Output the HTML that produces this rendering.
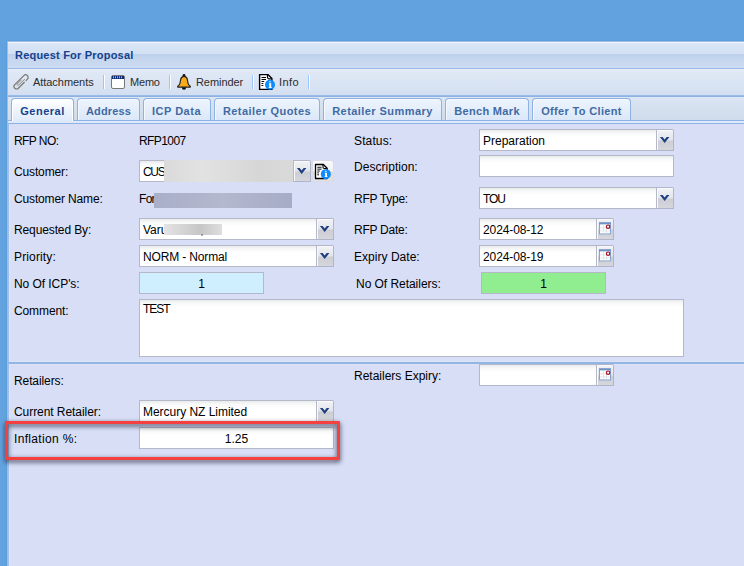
<!DOCTYPE html>
<html><head><meta charset="utf-8">
<style>
*{box-sizing:border-box;margin:0;padding:0}
html,body{width:744px;height:566px;overflow:hidden}
body{background:#62a3df;font-family:"Liberation Sans",sans-serif;font-size:12px;color:#000;position:relative}
.abs{position:absolute}
#dk1{left:6px;top:40px;width:1px;height:530px;background:#5b9cda}
#dk2{left:6px;top:40px;width:740px;height:1px;background:#5b9cda}
#panel{left:7px;top:41px;width:745px;height:530px;border:1px solid #9dbeea;background:#d7def6}
#lb2{left:8px;top:123px;width:1px;height:450px;background:#9fc0ea}
#lb3{left:9px;top:124px;width:1px;height:450px;background:#dde4f9}
#hdr{left:8px;top:42px;width:743px;height:27px;background:linear-gradient(#f3f7fd 0,#f3f7fd 1px,#dae6f6 1px,#d3e0f3 12px,#bccfec 12px,#c4d5ee 16px,#cddcf2 26px);border-bottom:1px solid #99bbe8}
#hdr span{position:absolute;left:7px;top:7px;font-weight:bold;font-size:11px;color:#15428b;white-space:nowrap}
#tb{left:8px;top:69px;width:743px;height:27px;background:linear-gradient(#e6edf8,#e0e8f5 3px,#d3dff1);border-bottom:1px solid #99bbe8}
.tbt{position:absolute;top:76px;font-size:11px;line-height:13px;color:#2c2c2c;white-space:nowrap}
.sep{position:absolute;top:75px;width:2px;height:14px;border-left:1px solid #98c8ff;border-right:1px solid #fff}
#strip{left:8px;top:96px;width:743px;height:25px;background:linear-gradient(#dbe5f3,#cfdcec);border-top:1px solid #8db2e3;border-bottom:1px solid #8db2e3}
.tab{position:absolute;top:98px;height:22px;border:1px solid #8db2e3;border-bottom:none;border-radius:4px 4px 0 0;background:linear-gradient(#eef4fd,#dbe8f9);box-shadow:inset 1px 1px 0 #f4f8fe;font-weight:bold;font-size:11px;color:#416aa3;text-align:center;line-height:25px;white-space:nowrap}
.tab.act{background:linear-gradient(#ffffff,#deeafc);color:#15428b;height:23px;box-shadow:inset 1px 1px 0 #fff,inset -1px 0 0 #fff}
#spacer{left:8px;top:121px;width:743px;height:3px;background:#deeafc;border-bottom:1px solid #8db2e3}
.lbl{position:absolute;white-space:nowrap;font-size:12px;line-height:14px}
.inp{position:absolute;height:22px;border:1px solid #b5b8c8;background:#fff linear-gradient(#e9ebec 0,#f7f8f8 3px,#fff 7px);font-size:12px;line-height:22px;padding-left:3px;white-space:nowrap;overflow:hidden}
.trg{position:absolute;width:17px;height:22px;border:1px solid #b0b5c9;border-left:none;border-top-right-radius:2px;background:linear-gradient(#f2f3f6 0,#e4e5ea 10px,#cdced4 11px,#d6d7dc 20px);box-shadow:inset 1px 1px 0 #fafafc}
.trg svg{position:absolute;left:0;top:0}
</style></head><body>
<div class="abs" id="dk1"></div><div class="abs" id="dk2"></div>
<div class="abs" id="panel"></div>
<div class="abs" id="lb2"></div><div class="abs" id="lb3"></div>
<div class="abs" id="hdr"><span id="hdrt" style="letter-spacing:0.21px">Request For Proposal</span></div>
<div class="abs" id="tb"></div>

<svg class="abs" style="left:12px;top:73px" width="18" height="18" viewBox="0 0 18 18"><g transform="translate(0.100,-0.100) rotate(45 9 9)" fill="none" stroke="#7d7770" stroke-width="1.200" stroke-linecap="round"><path d="M11.550 7 V15.400 A2.550 2.550 0 0 1 6.450 15.400 V2.600 A2.550 2.550 0 0 1 11.550 2.600 V4.500"/><path d="M9.600 5 V13 A0.900 0.900 0 0 1 7.800 13 V7.500" stroke="#8a857f" stroke-width="0.900"/></g></svg>
<svg class="abs" style="left:110.400px;top:74px" width="17" height="17" viewBox="0 0 17 17"><rect x="1.500" y="1.500" width="13" height="13" rx="1.500" fill="#fff" stroke="#7a7676"/><rect x="2" y="2" width="12" height="3" fill="#0b2a7a"/><path d="M3.500 2.300v2M5.500 2.300v2M7.500 2.300v2M9.500 2.300v2M11.500 2.300v2" stroke="#dfe6f5" stroke-width=".7"/></svg>
<svg class="abs" style="left:176px;top:73px" width="17" height="18" viewBox="0 0 17 18"><circle cx="8" cy="2.300" r="1.350" fill="#111"/><path d="M5.800 14.300a2.200 2.500 0 0 0 4.400 0z" fill="#111"/><path d="M8 3.300C5.900 3.300 5 4.800 4.650 6.500L3.950 10.500C3.800 11.500 3 12.300 1.700 13.400V14.050H14.300V13.400C13 12.300 12.200 11.500 12.050 10.500L11.350 6.500C11 4.800 10.100 3.300 8 3.300Z" fill="#fbab18" stroke="#222" stroke-width="1.200" stroke-linejoin="round"/></svg>
<svg class="abs" style="left:258px;top:73px" width="18" height="18" viewBox="0 0 18 18"><path d="M1.600 1.600h8.300l4 4v10.800h-12.300z" fill="#fff" stroke="#000" stroke-width="1.400" stroke-linejoin="round"/><path d="M9.500 1.800v2.500a1.500 1.500 0 0 0 1.500 1.500h2.500" fill="none" stroke="#000" stroke-width="1.200"/><path d="M3.500 4.500h4.500M3.500 6.500h4.500M3.500 8.500h2.700M3.500 10.500h1.800M3.500 12.500h1.800" stroke="#000" stroke-width="1"/><circle cx="12" cy="11.800" r="5" fill="#0d8bff"/><path d="M12 8l1.300 1.300h-2.600z M11 10.300h2.200v3.600h.5v1h-3v-1h.6v-2.600h-.5z" fill="#fff"/></svg>

<span class="tbt" id="t_att" style="left:33px;letter-spacing:-0.05px">Attachments</span>
<div class="sep" style="left:103px"></div>
<span class="tbt" id="t_memo" style="left:130px;letter-spacing:-0.2px">Memo</span>
<div class="sep" style="left:169px"></div>
<span class="tbt" id="t_rem" style="left:196px;letter-spacing:-0.07px">Reminder</span>
<div class="sep" style="left:252px"></div>
<span class="tbt" id="t_info" style="left:279px;letter-spacing:0.45px">Info</span>
<div class="sep" style="left:308px"></div>
<div class="abs" id="strip"></div>
<div class="abs" id="spacer"></div>
<div class="tab act" style="left:11px;width:63px"><span id="tab1" style="letter-spacing:0.5px">General</span></div>
<div class="tab" style="left:77px;width:63px"><span id="tab2" style="letter-spacing:0.17px">Address</span></div>
<div class="tab" style="left:143px;width:68px"><span id="tab3" style="letter-spacing:0.5px;margin-left:-1px">ICP Data</span></div>
<div class="tab" style="left:214px;width:106px"><span id="tab4" style="letter-spacing:0.46px">Retailer Quotes</span></div>
<div class="tab" style="left:323px;width:119px"><span id="tab5" style="letter-spacing:0.44px">Retailer Summary</span></div>
<div class="tab" style="left:445px;width:84px"><span id="tab6" style="letter-spacing:0.33px">Bench Mark</span></div>
<div class="tab" style="left:532px;width:99px"><span id="tab7" style="letter-spacing:0.33px">Offer To Client</span></div>
<span class="lbl" id="l_rfpno" style="left:14px;top:134px;letter-spacing:-0.57px">RFP NO:</span>
<span class="lbl" id="v_rfpno" style="left:139px;top:134px;letter-spacing:-0.59px">RFP1007</span>
<span class="lbl" id="l_cust" style="left:14px;top:165px;letter-spacing:-0.14px">Customer:</span>
<div class="inp" style="left:139px;top:160px;width:155px"><span id="v_cust" style="letter-spacing:-1.3px">CUS</span></div><div class="abs" style="left:164px;top:160px;width:129px;height:22px;background:linear-gradient(90deg,#dadada,#e2e2e2 30%,#d6d6d6 75%,#d9d9d9)"></div><div class="trg" style="left:294px;top:160px"><svg width="17" height="22" viewBox="0 0 17 22"><polygon points="2.900,7.100 5.600,7.100 7.650,9.500 9.700,7.100 12.400,7.100 7.650,13.100" fill="#1e3f80"/></svg></div>
<div class="abs" style="left:312px;top:160px;width:22px;height:22px;border-radius:3px;background:linear-gradient(#fafafa 0,#f2f2f2 10px,#dcdcdc 11px,#e2e2e2);border:1px solid #d9dbe6"></div>
<svg class="abs" style="left:314.350px;top:162.650px" width="17" height="17" viewBox="0 0 18 18"><path d="M1.600 1.600h8.300l4 4v10.800h-12.300z" fill="#fff" stroke="#000" stroke-width="1.400" stroke-linejoin="round"/><path d="M9.500 1.800v2.500a1.500 1.500 0 0 0 1.500 1.500h2.500" fill="none" stroke="#000" stroke-width="1.200"/><path d="M3.500 4.500h4.500M3.500 6.500h4.500M3.500 8.500h2.700M3.500 10.500h1.800M3.500 12.500h1.800" stroke="#000" stroke-width="1"/><circle cx="12.550" cy="11.800" r="5.300" fill="#0d8bff"/><path transform="translate(0.550,0)" d="M12 8l1.300 1.300h-2.600z M11 10.300h2.200v3.600h.5v1h-3v-1h.6v-2.600h-.5z" fill="#fff"/></svg>
<span class="lbl" id="l_cname" style="left:14px;top:192px;letter-spacing:-0.15px">Customer Name:</span>
<span class="lbl" id="v_cname" style="left:139px;top:192px;letter-spacing:-0.7px">For</span>
<div class="abs" style="left:154px;top:193px;width:138px;height:15px;background:linear-gradient(90deg,#a9afc8,#b3b8ce 50%,#a6acc6)"></div>
<span class="lbl" id="l_req" style="left:14px;top:223px;letter-spacing:-0.12px">Requested By:</span>
<div class="inp" style="left:139px;top:218px;width:178px"><span id="v_req">Varu</span></div><div class="abs" style="left:164px;top:224px;width:58px;height:11px;background:linear-gradient(90deg,#e4e4e4,#c6c6c6 62%,#dedede)"></div><div class="trg" style="left:317px;top:218px"><svg width="17" height="22" viewBox="0 0 17 22"><polygon points="2.900,7.100 5.600,7.100 7.650,9.500 9.700,7.100 12.400,7.100 7.650,13.100" fill="#1e3f80"/></svg></div>
<div class="abs" style="left:201px;top:234px;width:2px;height:2px;background:#8a8a8a;border-radius:1px"></div>
<span class="lbl" id="l_pri" style="left:14px;top:250px;letter-spacing:0.14px">Priority:</span>
<div class="inp" style="left:139px;top:245px;width:178px"><span id="v_pri" style="letter-spacing:-0.15px">NORM - Normal</span></div><div class="trg" style="left:317px;top:245px"><svg width="17" height="22" viewBox="0 0 17 22"><polygon points="2.900,7.100 5.600,7.100 7.650,9.500 9.700,7.100 12.400,7.100 7.650,13.100" fill="#1e3f80"/></svg></div>
<span class="lbl" id="l_icp" style="left:14px;top:277px;letter-spacing:-0.06px">No Of ICP's:</span>
<div class="inp" style="left:139px;top:272px;width:125px;background:#cfefff;text-align:center;padding:0"><span id="v_icp">1</span></div>
<span class="lbl" id="l_com" style="left:14px;top:304px;letter-spacing:-0.11px">Comment:</span>
<div class="inp" style="left:139px;top:299px;width:545px;height:58px;line-height:16px;padding-top:1px"><span id="v_com" style="letter-spacing:-1.03px">TEST</span></div>
<span class="lbl" id="l_stat" style="left:354px;top:134px;letter-spacing:0.13px">Status:</span>
<div class="inp" style="left:479px;top:129px;width:178px"><span id="v_stat" style="letter-spacing:0.0px">Preparation</span></div><div class="trg" style="left:657px;top:129px"><svg width="17" height="22" viewBox="0 0 17 22"><polygon points="2.900,7.100 5.600,7.100 7.650,9.500 9.700,7.100 12.400,7.100 7.650,13.100" fill="#1e3f80"/></svg></div>
<span class="lbl" id="l_desc" style="left:354px;top:160px;letter-spacing:0.03px">Description:</span>
<div class="inp" style="left:479px;top:155px;width:195px"></div>
<span class="lbl" id="l_type" style="left:354px;top:192px;letter-spacing:-0.26px">RFP Type:</span>
<div class="inp" style="left:479px;top:187px;width:178px"><span id="v_type" style="letter-spacing:-1.1px">TOU</span></div><div class="trg" style="left:657px;top:187px"><svg width="17" height="22" viewBox="0 0 17 22"><polygon points="2.900,7.100 5.600,7.100 7.650,9.500 9.700,7.100 12.400,7.100 7.650,13.100" fill="#1e3f80"/></svg></div>
<span class="lbl" id="l_rdate" style="left:354px;top:223px;letter-spacing:-0.26px">RFP Date:</span>
<div class="inp" style="left:479px;top:218px;width:118px"><span id="v_rdate" style="letter-spacing:-0.1px">2024-08-12</span></div><div class="trg cal" style="left:597px;top:218px"><svg width="17" height="22" viewBox="0 0 17 22"><g transform="translate(0,-0.600)"><rect x="2.500" y="4.500" width="11" height="11" fill="#fff" stroke="#86a5d3" stroke-width="1"/><rect x="2" y="4" width="12" height="2" fill="#6f93c7"/><path d="M6.500 6v9M9.500 6v9M3 9.500h10M3 12.500h10" stroke="#e1e4e9" stroke-width="1" fill="none"/><circle cx="11.100" cy="8.300" r="1.700" fill="#fff" stroke="#a3121c" stroke-width="1.200"/></g></svg></div>
<span class="lbl" id="l_edate" style="left:354px;top:250px;letter-spacing:0.03px">Expiry Date:</span>
<div class="inp" style="left:479px;top:245px;width:118px"><span id="v_edate" style="letter-spacing:-0.1px">2024-08-19</span></div><div class="trg cal" style="left:597px;top:245px"><svg width="17" height="22" viewBox="0 0 17 22"><g transform="translate(0,-0.600)"><rect x="2.500" y="4.500" width="11" height="11" fill="#fff" stroke="#86a5d3" stroke-width="1"/><rect x="2" y="4" width="12" height="2" fill="#6f93c7"/><path d="M6.500 6v9M9.500 6v9M3 9.500h10M3 12.500h10" stroke="#e1e4e9" stroke-width="1" fill="none"/><circle cx="11.100" cy="8.300" r="1.700" fill="#fff" stroke="#a3121c" stroke-width="1.200"/></g></svg></div>
<span class="lbl" id="l_nret" style="left:356px;top:277px;letter-spacing:-0.04px">No Of Retailers:</span>
<div class="inp" style="left:481px;top:272px;width:125px;background:#90ee90;text-align:center;padding:0"><span id="v_nret">1</span></div>
<div class="abs" style="left:9px;top:361px;width:740px;height:4px;background:#dde4f8"></div><div class="abs" style="left:8px;top:362px;width:740px;height:2px;background:#91b6e6"></div>
<span class="lbl" id="l_ret" style="left:14px;top:374px;letter-spacing:-0.1px">Retailers:</span>
<span class="lbl" id="l_rexp" style="left:354px;top:369px;letter-spacing:0.0px">Retailers Expiry:</span>
<div class="inp" style="left:479px;top:364px;width:118px"><span id="v_rexp"></span></div><div class="trg cal" style="left:597px;top:364px"><svg width="17" height="22" viewBox="0 0 17 22"><g transform="translate(0,-0.600)"><rect x="2.500" y="4.500" width="11" height="11" fill="#fff" stroke="#86a5d3" stroke-width="1"/><rect x="2" y="4" width="12" height="2" fill="#6f93c7"/><path d="M6.500 6v9M9.500 6v9M3 9.500h10M3 12.500h10" stroke="#e1e4e9" stroke-width="1" fill="none"/><circle cx="11.100" cy="8.300" r="1.700" fill="#fff" stroke="#a3121c" stroke-width="1.200"/></g></svg></div>
<span class="lbl" id="l_cur" style="left:14px;top:405px;letter-spacing:-0.06px">Current Retailer:</span>
<div class="inp" style="left:139px;top:400px;width:178px"><span id="v_cur" style="letter-spacing:-0.03px">Mercury NZ Limited</span></div><div class="trg" style="left:317px;top:400px"><svg width="17" height="22" viewBox="0 0 17 22"><polygon points="2.900,7.100 5.600,7.100 7.650,9.500 9.700,7.100 12.400,7.100 7.650,13.100" fill="#1e3f80"/></svg></div>
<span class="lbl" id="l_inf" style="left:14px;top:432px;letter-spacing:0.33px">Inflation %:</span>
<div class="inp" style="left:139px;top:427px;width:195px;text-align:center;padding:0"><span id="v_inf">1.25</span></div>
<div class="abs" id="redbox" style="left:5px;top:421px;width:335px;height:39px;border:3px solid #f54040;border-radius:1px;filter:drop-shadow(0.500px 2px 2.500px rgba(40,40,60,.95))"></div>

</body></html>
